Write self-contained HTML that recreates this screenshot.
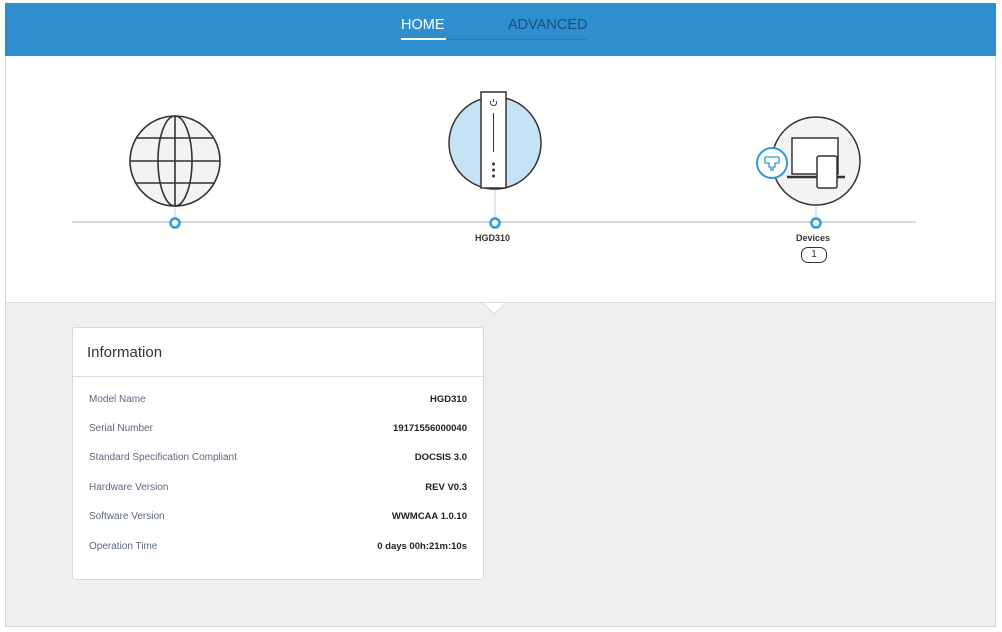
<!DOCTYPE html>
<html><head><meta charset="utf-8"><style>
*{margin:0;padding:0;box-sizing:border-box}
body{width:1002px;height:632px;background:#fff;font-family:"Liberation Sans",sans-serif;position:relative;overflow:hidden}
.frame{position:absolute;left:5px;top:3px;width:991px;height:624px;border:1px solid #d6d6d6;background:#efefef}
.hdr{position:absolute;left:5px;top:3px;width:991px;height:53px;background:#2f8fce}
.nav{position:absolute;top:17px;font-size:14.5px;letter-spacing:0}
.white{position:absolute;left:6px;top:56px;width:989px;height:247px;background:#fff;border-bottom:1px solid #ddd}
.card{position:absolute;left:72px;top:327px;width:412px;height:253px;background:#fff;border:1px solid #d8d8d8;border-radius:3px}
.card h2{font-weight:normal;font-size:15px;color:#333;padding:16px 0 0 14px;height:49px;border-bottom:1px solid #ddd}
.row{position:absolute;left:16px;right:16px;font-size:10px;color:#5b6780}
.row b{position:absolute;right:0;top:0;color:#222;font-size:9.5px}
</style></head><body>
<div class="frame"></div>
<div class="hdr"></div>
<div class="nav" style="left:401px;color:#fff">HOME</div>
<div style="position:absolute;left:401px;top:38px;width:45px;height:2px;background:#fff"></div>
<div style="position:absolute;left:446px;top:39px;width:141px;height:1px;background:#2a7ab8"></div>
<div class="nav" style="left:508px;color:#1d4f7a">ADVANCED</div>
<div class="white"></div>
<svg style="position:absolute;left:0;top:0" width="1002" height="320">
<line x1="72" y1="222" x2="916" y2="222" stroke="#ccc" stroke-width="1.5"/>
<line x1="175" y1="205" x2="175" y2="218" stroke="#ccc"/>
<line x1="495" y1="190" x2="495" y2="218" stroke="#ccc"/>
<line x1="816" y1="205" x2="816" y2="218" stroke="#ccc"/>
<g fill="#fff" stroke="#3399dd" stroke-width="2.5"><circle cx="175" cy="223" r="4.5"/><circle cx="495" cy="223" r="4.5"/><circle cx="816" cy="223" r="4.5"/></g>
<g fill="none" stroke="#333" stroke-width="1.6">
<ellipse cx="175" cy="161" rx="45" ry="45" fill="#f3f3f3"/>
<ellipse cx="175" cy="161" rx="17" ry="45"/>
<line x1="175" y1="116" x2="175" y2="206"/>
<line x1="130" y1="161" x2="220" y2="161"/>
<line x1="137" y1="138" x2="213" y2="138"/>
<line x1="135" y1="183" x2="215" y2="183"/>
</g>
<circle cx="495" cy="143" r="46" fill="#c6e3f5" stroke="#333" stroke-width="1.5"/>
<rect x="481" y="92" width="25" height="96" fill="#fff" stroke="#333" stroke-width="1.5"/>
<path d="M491 101 a3 3 0 1 0 5 0 M493.5 99 v3" fill="none" stroke="#333" stroke-width="1"/>
<line x1="493.5" y1="113" x2="493.5" y2="152" stroke="#333"/>
<g fill="#333"><circle cx="493.5" cy="164" r="1.5"/><circle cx="493.5" cy="170" r="1.5"/><circle cx="493.5" cy="176" r="1.5"/></g>
<circle cx="816" cy="161" r="44" fill="#f3f3f3" stroke="#333" stroke-width="1.5"/>
<rect x="792" y="138" width="46" height="36" fill="#fff" stroke="#333" stroke-width="1.5"/>
<line x1="787" y1="177" x2="845" y2="177" stroke="#333" stroke-width="2.5"/>
<rect x="817" y="156" width="20" height="32" rx="2" fill="#fff" stroke="#333" stroke-width="1.5"/>
<circle cx="772" cy="163" r="15" fill="#fff" stroke="#3399dd" stroke-width="2"/>
<path d="M765 157 h14 v6 h-4 v4 h-2 v3 h-2 v-3 h-2 v-4 h-4z" fill="none" stroke="#3399dd" stroke-width="1.3"/>
<polygon points="484,303 505,303 494,314" fill="#fff"/>
<polyline points="484,304 494,314 505,304" fill="none" stroke="#ddd"/>
</svg>
<div style="position:absolute;left:475px;top:233px;font-size:9px;font-weight:bold;color:#333">HGD310</div>
<div style="position:absolute;left:796px;top:233px;font-size:9px;font-weight:bold;color:#333">Devices</div>
<div style="position:absolute;left:801px;top:247px;width:26px;height:16px;border:1.5px solid #333;border-radius:7px;font-size:10px;text-align:center;line-height:13px;color:#333">1</div>
<div class="card"><h2>Information</h2>
<div class="row" style="top:66px">Model Name<b>HGD310</b></div>
<div class="row" style="top:95px">Serial Number<b>19171556000040</b></div>
<div class="row" style="top:124px">Standard Specification Compliant<b>DOCSIS 3.0</b></div>
<div class="row" style="top:154px">Hardware Version<b>REV V0.3</b></div>
<div class="row" style="top:183px">Software Version<b>WWMCAA 1.0.10</b></div>
<div class="row" style="top:213px">Operation Time<b>0 days 00h:21m:10s</b></div>
</div>
</body></html>
